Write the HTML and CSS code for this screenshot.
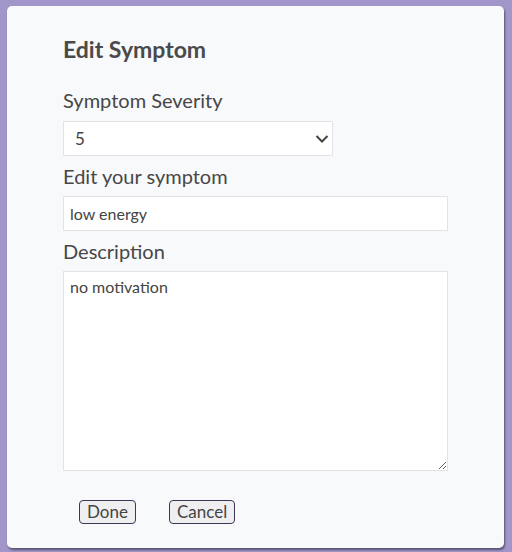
FILE: index.html
```html
<!DOCTYPE html>
<html>
<head>
<meta charset="utf-8">
<link rel="stylesheet" href="styles.css">
</head>
<body>
<div class="card">
  <h2 class="title">Edit Symptom</h2>
  <label class="label">Symptom Severity</label>
  <div class="select-wrap">
    <select class="field select">
      <option>1</option><option>2</option><option>3</option><option>4</option>
      <option selected>5</option>
      <option>6</option><option>7</option><option>8</option><option>9</option><option>10</option>
    </select>
    <svg class="chevron" width="14" height="10" viewBox="0 0 14 10"><polyline points="1.5,2 7,7.5 12.5,2" fill="none" stroke="#444" stroke-width="2"/></svg>
  </div>
  <label class="label">Edit your symptom</label>
  <input class="field input" type="text" value="low energy">
  <label class="label">Description</label>
  <textarea class="field textarea">no motivation</textarea>
  <div class="actions">
    <button class="btn">Done</button>
    <button class="btn">Cancel</button>
  </div>
</div>
</body>
</html>
```
FILE: styles.css
```css
html, body {
  margin: 0;
  padding: 0;
}
body {
  background: #a195c9;
  width: 512px;
  height: 552px;
  padding: 6px 0 0 7px;
  box-sizing: border-box;
  font-family: Lato, "Open Sans", sans-serif;
  color: #474747;
}
.card {
  width: 497px;
  height: 542px;
  box-sizing: border-box;
  background: #f8f9fb;
  border-radius: 5px;
  box-shadow: 1px 2px 2px rgba(50, 50, 70, 0.65);
  padding: 29px 0 0 56px;
  display: flex;
  flex-direction: column;
  align-items: flex-start;
}
.title {
  margin: 0 0 25px 0;
  font-size: 23px;
  font-weight: 700;
  line-height: 28px;
  color: #4a4a4a;
}
.label {
  font-size: 20px;
  line-height: 24px;
  color: #474747;
  margin-bottom: 8px;
}
.field {
  box-sizing: border-box;
  border: 1px solid #e2e2e8;
  background: #fff;
  font-family: Lato, "Open Sans", sans-serif;
  font-size: 16px;
  color: #444;
  border-radius: 0;
  outline: none;
}
.select-wrap {
  position: relative;
  margin-top: 1px;
  margin-bottom: 8px;
}
.select {
  display: block;
  width: 270px;
  height: 35px;
  padding: 0 11px;
  font-size: 17px;
  -webkit-appearance: none;
  appearance: none;
}
.chevron {
  position: absolute;
  left: 252px;
  top: 13px;
}
.input {
  width: 385px;
  height: 35px;
  padding: 0 6px;
  margin-bottom: 8px;
}
.textarea {
  width: 385px;
  height: 200px;
  padding: 5px 6px;
  resize: vertical;
  margin: 0;
}
.actions {
  display: flex;
  gap: 33px;
  margin-top: 29px;
  padding-left: 16px;
}
.btn {
  font-family: Lato, "Open Sans", sans-serif;
  font-size: 17px;
  color: #444;
  background: #efeff1;
  border: 1px solid #3d3658;
  border-radius: 4px;
  height: 24px;
  padding: 0 7px;
  line-height: 20px;
}
```
